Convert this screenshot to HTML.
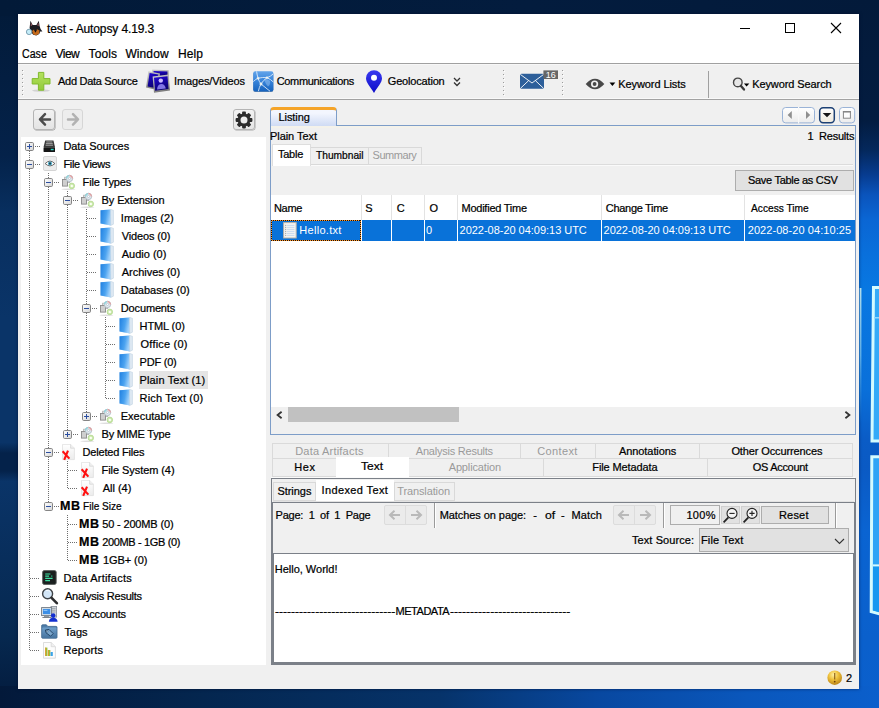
<!DOCTYPE html>
<html lang="en"><head><meta charset="utf-8"><title>test - Autopsy 4.19.3</title>
<style>
html,body{margin:0;padding:0;}
body{width:879px;height:708px;overflow:hidden;position:relative;background:#04224a;font-family:'Liberation Sans', sans-serif;font-size:11px;}
body>div,body>span,body>svg{position:absolute;}
.t{white-space:pre;display:block;}
.k{-webkit-text-stroke:0.22px #000;}
</style></head><body>
<svg width="879" height="708" viewBox="0 0 879 708" style="left:0;top:0">
<defs>
<linearGradient id="bgL" x1="0" y1="0" x2="0" y2="1">
<stop offset="0" stop-color="#021a38"/><stop offset="0.22" stop-color="#04224a"/><stop offset="0.30" stop-color="#082f5f"/><stop offset="0.45" stop-color="#0a3468"/>
<stop offset="0.625" stop-color="#0a3468"/><stop offset="0.64" stop-color="#04224a"/><stop offset="0.665" stop-color="#04224a"/><stop offset="0.68" stop-color="#0a3468"/>
<stop offset="0.9" stop-color="#06284f"/><stop offset="1" stop-color="#031a3c"/></linearGradient>
<linearGradient id="bgT" x1="0" y1="0" x2="1" y2="0">
<stop offset="0" stop-color="#021a38"/><stop offset="0.6" stop-color="#031c3e"/><stop offset="1" stop-color="#031a3a"/></linearGradient>
<linearGradient id="bgB" x1="0" y1="0" x2="1" y2="0">
<stop offset="0" stop-color="#03193a"/><stop offset="0.23" stop-color="#04264f"/><stop offset="0.5" stop-color="#06336a"/><stop offset="0.68" stop-color="#0848a0"/><stop offset="0.85" stop-color="#0a57bc"/><stop offset="1" stop-color="#0b5fcc"/></linearGradient>
<linearGradient id="bgR" x1="0" y1="0" x2="0" y2="1">
<stop offset="0" stop-color="#031a3a"/><stop offset="0.17" stop-color="#031c40"/><stop offset="0.212" stop-color="#04285c"/><stop offset="0.247" stop-color="#073c90"/>
<stop offset="0.275" stop-color="#0a54bc"/><stop offset="0.31" stop-color="#0a66d4"/><stop offset="0.36" stop-color="#0970dc"/><stop offset="0.41" stop-color="#0878e2"/>
<stop offset="0.55" stop-color="#0a70da"/><stop offset="0.62" stop-color="#0a5cc6"/><stop offset="0.66" stop-color="#0a5ac4"/><stop offset="0.75" stop-color="#0a64d2"/>
<stop offset="0.9" stop-color="#0a60cc"/><stop offset="1" stop-color="#0b5fcc"/></linearGradient>
<linearGradient id="glare" x1="0" y1="0" x2="0" y2="1"><stop offset="0" stop-color="#c8f6ff"/><stop offset="0.5" stop-color="#7fd0ff" stop-opacity="0.8"/><stop offset="1" stop-color="#3aa0f0" stop-opacity="0"/></linearGradient>
</defs>
<rect x="0" y="0" width="879" height="708" fill="url(#bgL)"/>
<rect x="0" y="0" width="879" height="16" fill="url(#bgT)"/>
<rect x="856" y="0" width="23" height="708" fill="url(#bgR)"/>
<rect x="0" y="686" width="879" height="22" fill="url(#bgB)"/>
<rect x="859.6" y="288" width="1.8" height="135" fill="url(#glare)"/>
<path d="M873.5 287.5 H882 V441 H872 Z" fill="#34aaf8" stroke="#d4fbff" stroke-width="3"/>
<rect x="874" y="317" width="6" height="1.5" fill="#8fd8ff"/>
<path d="M871.8 456.7 H882 V614.5 L871.2 611.5 Z" fill="#2ea4f6" stroke="#d4fbff" stroke-width="3"/>
<path d="M873 566.2 H880 V612.6 L873 610.4 Z" fill="#1698f0"/>
<rect x="873" y="564.4" width="7" height="2" fill="#d4fbff"/>
</svg>
<div style="left:18px;top:14px;width:841px;height:675px;background:#f0f0f0;box-shadow:0 0 3px rgba(0,8,40,.55);"></div>
<div style="left:18px;top:14px;width:841px;height:49px;background:#ffffff;"></div>
<div style="left:18px;top:63px;width:841px;height:1px;background:#a0a0a0;"></div>
<span class="t k" style="left:47.10px;top:23.24px;font-size:12px;line-height:12px;color:#000;letter-spacing:-0.115px;">test - Autopsy 4.19.3</span>
<svg width="19" height="17" viewBox="0 0 19 17" style="left:25px;top:20px">
<path d="M5.4 0.7 L7.7 5 L11.4 5 L13.8 0.7 L14.6 6 L15.6 9 L17.4 11.6 L15.2 11.6 L14.2 14 L11.2 15.4 L8.2 14.8 L6.2 12 L4.6 8 Z" fill="#1c1c22"/>
<path d="M5.9 2.4 L7.1 5.2 L5.8 6.2 Z" fill="#a86068"/><path d="M13.4 2.4 L12.2 5.2 L13.7 6.2 Z" fill="#a86068"/>
<path d="M7 11 L9 9.4 L10.4 12.4 L12 9.2 L14.6 10.4 L14 13.8 L11.2 15.2 L8.4 14.6 Z" fill="#c46a1c"/>
<path d="M9.2 10.2 L11.8 10.2 L10.5 12.6 Z" fill="#16161a"/>
<circle cx="4.1" cy="11.9" r="2.7" fill="#c4ecf8" stroke="#6f97ab" stroke-width="0.9"/>
</svg>
<div style="left:740px;top:28px;width:10px;height:1px;background:#000;"></div>
<div style="left:785px;top:23px;width:10px;height:10px;border:1px solid #000;box-sizing:border-box;"></div>
<svg width="12" height="12" viewBox="0 0 12 12" style="left:830px;top:22px"><path d="M1 1 L11 11 M11 1 L1 11" stroke="#000" stroke-width="1.1" fill="none"/></svg>
<span class="t k" style="left:22.11px;top:48.24px;font-size:12px;line-height:12px;color:#000;transform:scaleX(0.8852);transform-origin:0 0;">Case</span>
<span class="t k" style="left:55.50px;top:48.24px;font-size:12px;line-height:12px;color:#000;letter-spacing:-0.533px;">View</span>
<span class="t k" style="left:88.50px;top:48.24px;font-size:12px;line-height:12px;color:#000;letter-spacing:0.125px;">Tools</span>
<span class="t k" style="left:125.40px;top:48.24px;font-size:12px;line-height:12px;color:#000;letter-spacing:0.100px;">Window</span>
<span class="t k" style="left:178.10px;top:48.24px;font-size:12px;line-height:12px;color:#000;letter-spacing:0.067px;">Help</span>
<div style="left:18px;top:98px;width:841px;height:1px;background:#f9f9f9;"></div>
<div style="left:18px;top:99px;width:841px;height:1px;background:#a2a2a2;"></div>
<div style="left:18px;top:64px;width:841px;height:1px;background:#f7f7f7;"></div>
<div style="left:22px;top:70px;width:1px;height:25px;background:repeating-linear-gradient(to bottom,#9c9c9c 0 1px,transparent 1px 4px);"></div>
<div style="left:23px;top:71px;width:1px;height:25px;background:repeating-linear-gradient(to bottom,#ffffff 0 1px,transparent 1px 4px);"></div>
<div style="left:503px;top:70px;width:1px;height:25px;background:repeating-linear-gradient(to bottom,#9c9c9c 0 1px,transparent 1px 4px);"></div>
<div style="left:504px;top:71px;width:1px;height:25px;background:repeating-linear-gradient(to bottom,#ffffff 0 1px,transparent 1px 4px);"></div>
<div style="left:561.5px;top:70px;width:1px;height:25px;background:repeating-linear-gradient(to bottom,#9c9c9c 0 1px,transparent 1px 4px);"></div>
<div style="left:562.5px;top:71px;width:1px;height:25px;background:repeating-linear-gradient(to bottom,#ffffff 0 1px,transparent 1px 4px);"></div>
<svg width="22" height="21" viewBox="0 0 22 21" style="left:30px;top:71px">
<defs><linearGradient id="gp" x1="0" y1="0" x2="0" y2="1"><stop offset="0" stop-color="#b4e25e"/><stop offset="1" stop-color="#92ca3a"/></linearGradient></defs>
<ellipse cx="11" cy="19.6" rx="9" ry="1.2" fill="#000" opacity="0.12"/>
<path d="M8.4 1.4 H13.8 V7.6 H20 V13 H13.8 V19.2 H8.4 V13 H2.2 V7.6 H8.4 Z" fill="url(#gp)" stroke="#80ba2e" stroke-width="1" stroke-linejoin="round"/>
</svg>
<span class="t k" style="left:58.00px;top:76.09px;font-size:11px;line-height:11px;color:#000;letter-spacing:-0.286px;">Add Data Source</span>
<svg width="27" height="26" viewBox="145 68 27 26" style="left:145px;top:68px">
<defs><linearGradient id="gfr" x1="0" y1="0" x2="0.3" y2="1"><stop offset="0" stop-color="#d2d2d2"/><stop offset="1" stop-color="#7c7c7c"/></linearGradient>
<linearGradient id="gph" x1="0" y1="0" x2="0.4" y2="1"><stop offset="0" stop-color="#2408d8"/><stop offset="0.6" stop-color="#14049c"/><stop offset="1" stop-color="#0c0270"/></linearGradient></defs>
<path d="M152.2 69.6 L168.7 70.2 L168.5 78 L152 77 Z" fill="url(#gfr)"/><path d="M153.6 71 L167.4 71.5 L167.3 77 L153.4 76.4 Z" fill="url(#gph)"/>
<path d="M148.4 71.2 L160 73.4 L157.5 90 L146 87.6 Z" fill="url(#gfr)"/><path d="M149.6 72.9 L158.4 74.6 L156.4 88.2 L147.6 86.4 Z" fill="url(#gph)"/>
<path d="M152.6 76.4 L168.7 74.6 L170 90.6 L154 92.8 Z" fill="url(#gfr)"/><path d="M154 77.7 L167.5 76.2 L168.5 89 L155.1 90.7 Z" fill="url(#gph)"/>
<circle cx="160.8" cy="80.6" r="2.2" fill="#cdbcff"/><path d="M157 89.6 Q157.2 84.4 161 83.9 Q165 83.6 165.8 88.6 Z" fill="#7f74e6"/>
</svg>
<span class="t k" style="left:174.00px;top:76.09px;font-size:11px;line-height:11px;color:#000;letter-spacing:-0.133px;">Images/Videos</span>
<svg width="21" height="22" viewBox="0 0 21 22" style="left:253px;top:71px">
<defs><linearGradient id="gc" x1="0" y1="0" x2="0" y2="1"><stop offset="0" stop-color="#62a4ea"/><stop offset="0.45" stop-color="#3a86dc"/><stop offset="1" stop-color="#1763bd"/></linearGradient>
<radialGradient id="gn"><stop offset="0" stop-color="#fffdf0"/><stop offset="1" stop-color="#fffdf0" stop-opacity="0"/></radialGradient></defs>
<rect x="0.3" y="0.9" width="20" height="20.2" rx="2.2" fill="#0f3f78" opacity="0.55"/>
<rect x="0.2" y="0.2" width="20.2" height="20.2" rx="2.2" fill="url(#gc)"/>
<path d="M11 8.5 Q15 7.5 17 10 Q17.5 14 15 15.5 Q12.5 13 11 8.5 Z" fill="#9cc6f2" opacity="0.5"/>
<g stroke="#f4f9ff" stroke-width="1" fill="none" opacity="0.78">
<path d="M3.6 0.4 Q4 4 5.1 7.2 Q6 10.5 8 13 Q6 16.5 5.4 20.2"/><path d="M8 13 L17 20.2"/>
<path d="M0.3 10.6 Q3 8 5.1 7.2 Q10 6 14 6.7 Q17.6 5.5 20.3 2.8"/><path d="M14 6.7 Q10 9.5 8 13"/><path d="M14 6.7 Q18 8.4 20.3 11"/></g>
<circle cx="5.1" cy="7.2" r="2" fill="url(#gn)"/><circle cx="14" cy="6.7" r="2" fill="url(#gn)"/><circle cx="8" cy="13" r="2.2" fill="url(#gn)"/>
</svg>
<span class="t k" style="left:276.70px;top:76.09px;font-size:11px;line-height:11px;color:#000;letter-spacing:-0.338px;">Communications</span>
<svg width="18" height="24" viewBox="0 0 18 24" style="left:364.5px;top:69.5px">
<defs><linearGradient id="gg" x1="0" y1="0" x2="0" y2="1"><stop offset="0" stop-color="#3a3af0"/><stop offset="1" stop-color="#0c0cc8"/></linearGradient></defs>
<path d="M9 23 C5 16 1 12.5 1 8.2 A8 8 0 0 1 17 8.2 C17 12.5 13 16 9 23 Z" fill="url(#gg)"/>
<circle cx="9" cy="7.8" r="3" fill="#fff"/></svg>
<span class="t k" style="left:387.80px;top:76.09px;font-size:11px;line-height:11px;color:#000;letter-spacing:-0.180px;">Geolocation</span>
<svg width="8" height="10" viewBox="0 0 8 10" style="left:452.5px;top:76.5px"><path d="M1 1 L4 4 L7 1 M1 5.5 L4 8.5 L7 5.5" stroke="#333" stroke-width="1.3" fill="none"/></svg>
<svg width="40" height="20" viewBox="0 0 40 20" style="left:519px;top:70px">
<rect x="1" y="3.8" width="24" height="15" rx="1.5" fill="#2d5f9a"/>
<path d="M1.5 4.5 L13 13 L24.5 4.5 M1.5 18.3 L9.6 10.6 M24.5 18.3 L16.4 10.6" stroke="#fff" stroke-width="0.9" fill="none"/>
<rect x="24.4" y="0.4" width="14.6" height="8.6" fill="#666"/>
<text x="31.7" y="8" font-family="'Liberation Sans',sans-serif" font-size="9" fill="#fff" text-anchor="middle">16</text>
</svg>
<svg width="20" height="12" viewBox="0 0 20 12" style="left:585px;top:78px">
<path d="M0.7 6 Q10 -4.6 19.3 6 Q10 16.6 0.7 6 Z" fill="#484848"/>
<circle cx="9.6" cy="6" r="3.6" fill="#f0f0f0"/><circle cx="9.6" cy="6" r="1.9" fill="#484848"/></svg>
<svg width="7" height="5" viewBox="0 0 7 5" style="left:609px;top:82.4px"><path d="M0.5 0.4 H6.3 L3.4 4 Z" fill="#000"/></svg>
<span class="t k" style="left:618.20px;top:79.09px;font-size:11px;line-height:11px;color:#000;letter-spacing:-0.075px;">Keyword Lists</span>
<div style="left:708px;top:71px;width:1px;height:27px;background:#a0a0a0;"></div>
<svg width="18" height="15" viewBox="0 0 18 15" style="left:732px;top:76.6px">
<circle cx="5.8" cy="5.4" r="4.3" fill="#e6e6e6" stroke="#454545" stroke-width="1.4"/>
<path d="M8.8 8.8 L12 12.6" stroke="#3a3a3a" stroke-width="2.3" stroke-linecap="round"/>
<path d="M11.9 6.4 H17.3 L14.6 9.5 Z" fill="#000"/></svg>
<span class="t k" style="left:752.20px;top:79.09px;font-size:11px;line-height:11px;color:#000;letter-spacing:-0.092px;">Keyword Search</span>
<div style="left:33px;top:109px;width:22px;height:21px;background:linear-gradient(#f2f2f2,#e4e4e4);border:1px solid #b4b4b4;box-sizing:border-box;border-radius:3px;box-shadow:0.5px 0.5px 0 #9c9c9c;"></div>
<svg width="14" height="15" viewBox="0 0 14 15" style="left:37.5px;top:112px"><path d="M12 7.4 H3.2 M7 2.2 L2 7.4 L7 12.6" stroke="#4c4c4c" stroke-width="2.5" fill="none" stroke-linecap="round" stroke-linejoin="round"/></svg>
<div style="left:62px;top:109px;width:21px;height:21px;background:#ededed;border:1px solid #d6d6d6;box-sizing:border-box;border-radius:3px;"></div>
<svg width="14" height="15" viewBox="0 0 14 15" style="left:65.5px;top:112px"><path d="M2 7.4 H10.8 M7 2.2 L12 7.4 L7 12.6" stroke="#b2b2b2" stroke-width="2.5" fill="none" stroke-linecap="round" stroke-linejoin="round"/></svg>
<div style="left:233px;top:109px;width:22px;height:21px;background:linear-gradient(#f2f2f2,#e6e6e6);border:1px solid #b4b4b4;box-sizing:border-box;border-radius:3px;box-shadow:0.5px 0.5px 0 #a8a8a8;"></div>
<svg width="18" height="18" viewBox="0 0 18 18" style="left:235px;top:110.8px">
<g fill="#2b2b2b"><g id="tth"><rect x="7.1" y="0.6" width="3.8" height="4" rx="0.8"/><rect x="7.1" y="13.4" width="3.8" height="4" rx="0.8"/></g>
<use href="#tth" transform="rotate(45 9 9)"/><use href="#tth" transform="rotate(90 9 9)"/><use href="#tth" transform="rotate(135 9 9)"/></g>
<circle cx="9" cy="9" r="5" fill="none" stroke="#2b2b2b" stroke-width="3"/></svg>
<div style="left:21px;top:137px;width:245px;height:528px;background:#ffffff;"></div>
<div style="left:139px;top:371px;width:69px;height:18px;background:#e4e4e4;"></div>
<div style="left:29px;top:151px;width:1px;height:500px;background:repeating-linear-gradient(to bottom,#6e6e6e 0 1px,transparent 1px 2px);"></div>
<div style="left:48px;top:173px;width:1px;height:329px;background:repeating-linear-gradient(to bottom,#6e6e6e 0 1px,transparent 1px 2px);"></div>
<div style="left:67px;top:191px;width:1px;height:239px;background:repeating-linear-gradient(to bottom,#6e6e6e 0 1px,transparent 1px 2px);"></div>
<div style="left:86px;top:209px;width:1px;height:203px;background:repeating-linear-gradient(to bottom,#6e6e6e 0 1px,transparent 1px 2px);"></div>
<div style="left:105px;top:317px;width:1px;height:82px;background:repeating-linear-gradient(to bottom,#6e6e6e 0 1px,transparent 1px 2px);"></div>
<div style="left:67px;top:461px;width:1px;height:28px;background:repeating-linear-gradient(to bottom,#6e6e6e 0 1px,transparent 1px 2px);"></div>
<div style="left:67px;top:515px;width:1px;height:46px;background:repeating-linear-gradient(to bottom,#6e6e6e 0 1px,transparent 1px 2px);"></div>
<svg width="9" height="9" viewBox="0 0 9 9" style="left:25px;top:142px"><defs><linearGradient id="gbx" x1="0" y1="0" x2="1" y2="1"><stop offset="0" stop-color="#ffffff"/><stop offset="1" stop-color="#d6d6d6"/></linearGradient></defs><rect x="0.5" y="0.5" width="8" height="8" rx="1.2" fill="url(#gbx)" stroke="#858585"/><path d="M2 4.5 H7" stroke="#2b4ea0" stroke-width="1"/><path d="M4.5 2 V7" stroke="#2b4ea0" stroke-width="1"/></svg>
<div style="left:35px;top:146px;width:6px;height:1px;background:repeating-linear-gradient(to right,#6e6e6e 0 1px,transparent 1px 2px);"></div>
<svg width="12.6" height="12.6" viewBox="0 0 14 14" style="left:42.7px;top:139.8px">
<path d="M2.4 0.6 H11.6 L13.4 8 H0.6 Z" fill="#3a3a3a"/><path d="M3.6 2.2 H10.4 M3.2 4 H10.8 M2.9 5.8 H11.1" stroke="#bdbdbd" stroke-width="0.9"/>
<rect x="0.6" y="8" width="12.8" height="5.4" rx="0.8" fill="#151515"/><rect x="8.6" y="9.8" width="3.2" height="1.6" fill="#2fd6c8"/></svg>
<span class="t k" style="left:63.40px;top:141.09px;font-size:11px;line-height:11px;color:#000;letter-spacing:-0.082px;">Data Sources</span>
<svg width="9" height="9" viewBox="0 0 9 9" style="left:25px;top:160px"><defs><linearGradient id="gbx" x1="0" y1="0" x2="1" y2="1"><stop offset="0" stop-color="#ffffff"/><stop offset="1" stop-color="#d6d6d6"/></linearGradient></defs><rect x="0.5" y="0.5" width="8" height="8" rx="1.2" fill="url(#gbx)" stroke="#858585"/><path d="M2 4.5 H7" stroke="#2b4ea0" stroke-width="1"/></svg>
<div style="left:35px;top:164px;width:6px;height:1px;background:repeating-linear-gradient(to right,#6e6e6e 0 1px,transparent 1px 2px);"></div>
<svg width="14" height="15" viewBox="0 0 15 15" preserveAspectRatio="none" style="left:42.8px;top:155.5px">
<rect x="0.5" y="0.5" width="14" height="14" rx="1.5" fill="#ececec" stroke="#d2d2d2"/>
<path d="M2.3 7.6 Q7.5 2.6 12.7 7.6 Q7.5 12.2 2.3 7.6 Z" fill="#fff" stroke="#555" stroke-width="0.9"/>
<circle cx="7.5" cy="7.5" r="2.1" fill="#3aa3c4"/><circle cx="7.5" cy="7.5" r="0.9" fill="#222"/></svg>
<span class="t k" style="left:63.40px;top:159.09px;font-size:11px;line-height:11px;color:#000;letter-spacing:-0.322px;">File Views</span>
<svg width="9" height="9" viewBox="0 0 9 9" style="left:44px;top:178px"><defs><linearGradient id="gbx" x1="0" y1="0" x2="1" y2="1"><stop offset="0" stop-color="#ffffff"/><stop offset="1" stop-color="#d6d6d6"/></linearGradient></defs><rect x="0.5" y="0.5" width="8" height="8" rx="1.2" fill="url(#gbx)" stroke="#858585"/><path d="M2 4.5 H7" stroke="#2b4ea0" stroke-width="1"/></svg>
<div style="left:54px;top:182px;width:6px;height:1px;background:repeating-linear-gradient(to right,#6e6e6e 0 1px,transparent 1px 2px);"></div>
<svg width="16" height="17" viewBox="0 0 16 17" style="left:61px;top:174px">
<ellipse cx="7.4" cy="15.3" rx="7" ry="0.8" fill="#000" opacity="0.13"/>
<rect x="3.6" y="3.2" width="5.2" height="5.4" fill="#e6e6e6" stroke="#b0b0b0" stroke-width="0.8"/>
<rect x="1.5" y="5.5" width="5" height="6.6" fill="#cfcfcf" stroke="#8a8a8a" stroke-width="0.9"/>
<circle cx="8.5" cy="4.4" r="3.2" fill="#e3eaef" stroke="#a9b7c2" stroke-width="0.8"/>
<path d="M8.5 1.6 A2.8 2.8 0 0 1 11.3 4.4" stroke="#e79a9a" stroke-width="1.2" fill="none"/><path d="M5.7 4.4 A2.8 2.8 0 0 1 8 1.65" stroke="#8fd3da" stroke-width="1.2" fill="none"/>
<circle cx="8.5" cy="4.4" r="1.1" fill="#fff" stroke="#9ab" stroke-width="0.5"/>
<circle cx="10.8" cy="11.9" r="2.8" fill="#cdeaae" stroke="#a6d080" stroke-width="0.6"/><circle cx="10.8" cy="11.9" r="1.2" fill="#fbfff4"/></svg>
<span class="t k" style="left:82.60px;top:177.09px;font-size:11px;line-height:11px;color:#000;letter-spacing:-0.144px;">File Types</span>
<svg width="9" height="9" viewBox="0 0 9 9" style="left:63px;top:196px"><defs><linearGradient id="gbx" x1="0" y1="0" x2="1" y2="1"><stop offset="0" stop-color="#ffffff"/><stop offset="1" stop-color="#d6d6d6"/></linearGradient></defs><rect x="0.5" y="0.5" width="8" height="8" rx="1.2" fill="url(#gbx)" stroke="#858585"/><path d="M2 4.5 H7" stroke="#2b4ea0" stroke-width="1"/></svg>
<div style="left:73px;top:200px;width:6px;height:1px;background:repeating-linear-gradient(to right,#6e6e6e 0 1px,transparent 1px 2px);"></div>
<svg width="16" height="17" viewBox="0 0 16 17" style="left:80px;top:192px">
<ellipse cx="7.4" cy="15.3" rx="7" ry="0.8" fill="#000" opacity="0.13"/>
<rect x="3.6" y="3.2" width="5.2" height="5.4" fill="#e6e6e6" stroke="#b0b0b0" stroke-width="0.8"/>
<rect x="1.5" y="5.5" width="5" height="6.6" fill="#cfcfcf" stroke="#8a8a8a" stroke-width="0.9"/>
<circle cx="8.5" cy="4.4" r="3.2" fill="#e3eaef" stroke="#a9b7c2" stroke-width="0.8"/>
<path d="M8.5 1.6 A2.8 2.8 0 0 1 11.3 4.4" stroke="#e79a9a" stroke-width="1.2" fill="none"/><path d="M5.7 4.4 A2.8 2.8 0 0 1 8 1.65" stroke="#8fd3da" stroke-width="1.2" fill="none"/>
<circle cx="8.5" cy="4.4" r="1.1" fill="#fff" stroke="#9ab" stroke-width="0.5"/>
<circle cx="10.8" cy="11.9" r="2.8" fill="#cdeaae" stroke="#a6d080" stroke-width="0.6"/><circle cx="10.8" cy="11.9" r="1.2" fill="#fbfff4"/></svg>
<span class="t k" style="left:101.60px;top:195.09px;font-size:11px;line-height:11px;color:#000;letter-spacing:-0.118px;">By Extension</span>
<div style="left:87px;top:218px;width:10px;height:1px;background:repeating-linear-gradient(to right,#6e6e6e 0 1px,transparent 1px 2px);"></div>
<svg width="14" height="17" viewBox="0 0 14 17" style="left:100px;top:209px">
<defs><linearGradient id="gb" x1="0" y1="0" x2="1" y2="0.3"><stop offset="0" stop-color="#1f7fe0"/><stop offset="0.6" stop-color="#4ba3f0"/><stop offset="1" stop-color="#9fd0fa"/></linearGradient></defs>
<path d="M0.5 1.2 L10.6 0.4 L13.4 1.2 L13.4 15.2 L10.8 16.4 L0.5 14.6 Z" fill="#cfe3f4"/>
<path d="M0.5 1.2 L10.6 0.4 L10.8 16.4 L0.5 14.6 Z" fill="url(#gb)"/>
<path d="M10.6 0.4 L13.4 1.2 L13.4 15.2 L10.8 16.4 Z" fill="#dfeaf4" stroke="#b9c9d8" stroke-width="0.4"/></svg>
<span class="t k" style="left:120.80px;top:213.09px;font-size:11px;line-height:11px;color:#000;letter-spacing:0.044px;">Images (2)</span>
<div style="left:87px;top:236px;width:10px;height:1px;background:repeating-linear-gradient(to right,#6e6e6e 0 1px,transparent 1px 2px);"></div>
<svg width="14" height="17" viewBox="0 0 14 17" style="left:100px;top:227px">
<defs><linearGradient id="gb" x1="0" y1="0" x2="1" y2="0.3"><stop offset="0" stop-color="#1f7fe0"/><stop offset="0.6" stop-color="#4ba3f0"/><stop offset="1" stop-color="#9fd0fa"/></linearGradient></defs>
<path d="M0.5 1.2 L10.6 0.4 L13.4 1.2 L13.4 15.2 L10.8 16.4 L0.5 14.6 Z" fill="#cfe3f4"/>
<path d="M0.5 1.2 L10.6 0.4 L10.8 16.4 L0.5 14.6 Z" fill="url(#gb)"/>
<path d="M10.6 0.4 L13.4 1.2 L13.4 15.2 L10.8 16.4 Z" fill="#dfeaf4" stroke="#b9c9d8" stroke-width="0.4"/></svg>
<span class="t k" style="left:121.80px;top:231.09px;font-size:11px;line-height:11px;color:#000;letter-spacing:-0.144px;">Videos (0)</span>
<div style="left:87px;top:254px;width:10px;height:1px;background:repeating-linear-gradient(to right,#6e6e6e 0 1px,transparent 1px 2px);"></div>
<svg width="14" height="17" viewBox="0 0 14 17" style="left:100px;top:245px">
<defs><linearGradient id="gb" x1="0" y1="0" x2="1" y2="0.3"><stop offset="0" stop-color="#1f7fe0"/><stop offset="0.6" stop-color="#4ba3f0"/><stop offset="1" stop-color="#9fd0fa"/></linearGradient></defs>
<path d="M0.5 1.2 L10.6 0.4 L13.4 1.2 L13.4 15.2 L10.8 16.4 L0.5 14.6 Z" fill="#cfe3f4"/>
<path d="M0.5 1.2 L10.6 0.4 L10.8 16.4 L0.5 14.6 Z" fill="url(#gb)"/>
<path d="M10.6 0.4 L13.4 1.2 L13.4 15.2 L10.8 16.4 Z" fill="#dfeaf4" stroke="#b9c9d8" stroke-width="0.4"/></svg>
<span class="t k" style="left:121.80px;top:249.09px;font-size:11px;line-height:11px;color:#000;letter-spacing:-0.013px;">Audio (0)</span>
<div style="left:87px;top:272px;width:10px;height:1px;background:repeating-linear-gradient(to right,#6e6e6e 0 1px,transparent 1px 2px);"></div>
<svg width="14" height="17" viewBox="0 0 14 17" style="left:100px;top:263px">
<defs><linearGradient id="gb" x1="0" y1="0" x2="1" y2="0.3"><stop offset="0" stop-color="#1f7fe0"/><stop offset="0.6" stop-color="#4ba3f0"/><stop offset="1" stop-color="#9fd0fa"/></linearGradient></defs>
<path d="M0.5 1.2 L10.6 0.4 L13.4 1.2 L13.4 15.2 L10.8 16.4 L0.5 14.6 Z" fill="#cfe3f4"/>
<path d="M0.5 1.2 L10.6 0.4 L10.8 16.4 L0.5 14.6 Z" fill="url(#gb)"/>
<path d="M10.6 0.4 L13.4 1.2 L13.4 15.2 L10.8 16.4 Z" fill="#dfeaf4" stroke="#b9c9d8" stroke-width="0.4"/></svg>
<span class="t k" style="left:121.80px;top:267.09px;font-size:11px;line-height:11px;color:#000;letter-spacing:-0.036px;">Archives (0)</span>
<div style="left:87px;top:290px;width:10px;height:1px;background:repeating-linear-gradient(to right,#6e6e6e 0 1px,transparent 1px 2px);"></div>
<svg width="14" height="17" viewBox="0 0 14 17" style="left:100px;top:281px">
<defs><linearGradient id="gb" x1="0" y1="0" x2="1" y2="0.3"><stop offset="0" stop-color="#1f7fe0"/><stop offset="0.6" stop-color="#4ba3f0"/><stop offset="1" stop-color="#9fd0fa"/></linearGradient></defs>
<path d="M0.5 1.2 L10.6 0.4 L13.4 1.2 L13.4 15.2 L10.8 16.4 L0.5 14.6 Z" fill="#cfe3f4"/>
<path d="M0.5 1.2 L10.6 0.4 L10.8 16.4 L0.5 14.6 Z" fill="url(#gb)"/>
<path d="M10.6 0.4 L13.4 1.2 L13.4 15.2 L10.8 16.4 Z" fill="#dfeaf4" stroke="#b9c9d8" stroke-width="0.4"/></svg>
<span class="t k" style="left:120.80px;top:285.09px;font-size:11px;line-height:11px;color:#000;letter-spacing:-0.017px;">Databases (0)</span>
<svg width="9" height="9" viewBox="0 0 9 9" style="left:82px;top:304px"><defs><linearGradient id="gbx" x1="0" y1="0" x2="1" y2="1"><stop offset="0" stop-color="#ffffff"/><stop offset="1" stop-color="#d6d6d6"/></linearGradient></defs><rect x="0.5" y="0.5" width="8" height="8" rx="1.2" fill="url(#gbx)" stroke="#858585"/><path d="M2 4.5 H7" stroke="#2b4ea0" stroke-width="1"/></svg>
<div style="left:92px;top:308px;width:6px;height:1px;background:repeating-linear-gradient(to right,#6e6e6e 0 1px,transparent 1px 2px);"></div>
<svg width="16" height="17" viewBox="0 0 16 17" style="left:99px;top:300px">
<ellipse cx="7.4" cy="15.3" rx="7" ry="0.8" fill="#000" opacity="0.13"/>
<rect x="3.6" y="3.2" width="5.2" height="5.4" fill="#e6e6e6" stroke="#b0b0b0" stroke-width="0.8"/>
<rect x="1.5" y="5.5" width="5" height="6.6" fill="#cfcfcf" stroke="#8a8a8a" stroke-width="0.9"/>
<circle cx="8.5" cy="4.4" r="3.2" fill="#e3eaef" stroke="#a9b7c2" stroke-width="0.8"/>
<path d="M8.5 1.6 A2.8 2.8 0 0 1 11.3 4.4" stroke="#e79a9a" stroke-width="1.2" fill="none"/><path d="M5.7 4.4 A2.8 2.8 0 0 1 8 1.65" stroke="#8fd3da" stroke-width="1.2" fill="none"/>
<circle cx="8.5" cy="4.4" r="1.1" fill="#fff" stroke="#9ab" stroke-width="0.5"/>
<circle cx="10.8" cy="11.9" r="2.8" fill="#cdeaae" stroke="#a6d080" stroke-width="0.6"/><circle cx="10.8" cy="11.9" r="1.2" fill="#fbfff4"/></svg>
<span class="t k" style="left:120.80px;top:303.09px;font-size:11px;line-height:11px;color:#000;letter-spacing:-0.150px;">Documents</span>
<div style="left:106px;top:326px;width:10px;height:1px;background:repeating-linear-gradient(to right,#6e6e6e 0 1px,transparent 1px 2px);"></div>
<svg width="14" height="17" viewBox="0 0 14 17" style="left:119px;top:317px">
<defs><linearGradient id="gb" x1="0" y1="0" x2="1" y2="0.3"><stop offset="0" stop-color="#1f7fe0"/><stop offset="0.6" stop-color="#4ba3f0"/><stop offset="1" stop-color="#9fd0fa"/></linearGradient></defs>
<path d="M0.5 1.2 L10.6 0.4 L13.4 1.2 L13.4 15.2 L10.8 16.4 L0.5 14.6 Z" fill="#cfe3f4"/>
<path d="M0.5 1.2 L10.6 0.4 L10.8 16.4 L0.5 14.6 Z" fill="url(#gb)"/>
<path d="M10.6 0.4 L13.4 1.2 L13.4 15.2 L10.8 16.4 Z" fill="#dfeaf4" stroke="#b9c9d8" stroke-width="0.4"/></svg>
<span class="t k" style="left:139.60px;top:321.09px;font-size:11px;line-height:11px;color:#000;letter-spacing:-0.114px;">HTML (0)</span>
<div style="left:106px;top:344px;width:10px;height:1px;background:repeating-linear-gradient(to right,#6e6e6e 0 1px,transparent 1px 2px);"></div>
<svg width="14" height="17" viewBox="0 0 14 17" style="left:119px;top:335px">
<defs><linearGradient id="gb" x1="0" y1="0" x2="1" y2="0.3"><stop offset="0" stop-color="#1f7fe0"/><stop offset="0.6" stop-color="#4ba3f0"/><stop offset="1" stop-color="#9fd0fa"/></linearGradient></defs>
<path d="M0.5 1.2 L10.6 0.4 L13.4 1.2 L13.4 15.2 L10.8 16.4 L0.5 14.6 Z" fill="#cfe3f4"/>
<path d="M0.5 1.2 L10.6 0.4 L10.8 16.4 L0.5 14.6 Z" fill="url(#gb)"/>
<path d="M10.6 0.4 L13.4 1.2 L13.4 15.2 L10.8 16.4 Z" fill="#dfeaf4" stroke="#b9c9d8" stroke-width="0.4"/></svg>
<span class="t k" style="left:140.60px;top:339.09px;font-size:11px;line-height:11px;color:#000;letter-spacing:0.200px;">Office (0)</span>
<div style="left:106px;top:362px;width:10px;height:1px;background:repeating-linear-gradient(to right,#6e6e6e 0 1px,transparent 1px 2px);"></div>
<svg width="14" height="17" viewBox="0 0 14 17" style="left:119px;top:353px">
<defs><linearGradient id="gb" x1="0" y1="0" x2="1" y2="0.3"><stop offset="0" stop-color="#1f7fe0"/><stop offset="0.6" stop-color="#4ba3f0"/><stop offset="1" stop-color="#9fd0fa"/></linearGradient></defs>
<path d="M0.5 1.2 L10.6 0.4 L13.4 1.2 L13.4 15.2 L10.8 16.4 L0.5 14.6 Z" fill="#cfe3f4"/>
<path d="M0.5 1.2 L10.6 0.4 L10.8 16.4 L0.5 14.6 Z" fill="url(#gb)"/>
<path d="M10.6 0.4 L13.4 1.2 L13.4 15.2 L10.8 16.4 Z" fill="#dfeaf4" stroke="#b9c9d8" stroke-width="0.4"/></svg>
<span class="t k" style="left:139.60px;top:357.09px;font-size:11px;line-height:11px;color:#000;letter-spacing:-0.233px;">PDF (0)</span>
<div style="left:106px;top:380px;width:10px;height:1px;background:repeating-linear-gradient(to right,#6e6e6e 0 1px,transparent 1px 2px);"></div>
<svg width="14" height="17" viewBox="0 0 14 17" style="left:119px;top:371px">
<defs><linearGradient id="gb" x1="0" y1="0" x2="1" y2="0.3"><stop offset="0" stop-color="#1f7fe0"/><stop offset="0.6" stop-color="#4ba3f0"/><stop offset="1" stop-color="#9fd0fa"/></linearGradient></defs>
<path d="M0.5 1.2 L10.6 0.4 L13.4 1.2 L13.4 15.2 L10.8 16.4 L0.5 14.6 Z" fill="#cfe3f4"/>
<path d="M0.5 1.2 L10.6 0.4 L10.8 16.4 L0.5 14.6 Z" fill="url(#gb)"/>
<path d="M10.6 0.4 L13.4 1.2 L13.4 15.2 L10.8 16.4 Z" fill="#dfeaf4" stroke="#b9c9d8" stroke-width="0.4"/></svg>
<span class="t k" style="left:139.60px;top:375.09px;font-size:11px;line-height:11px;color:#000;letter-spacing:0.123px;">Plain Text (1)</span>
<div style="left:106px;top:398px;width:10px;height:1px;background:repeating-linear-gradient(to right,#6e6e6e 0 1px,transparent 1px 2px);"></div>
<svg width="14" height="17" viewBox="0 0 14 17" style="left:119px;top:389px">
<defs><linearGradient id="gb" x1="0" y1="0" x2="1" y2="0.3"><stop offset="0" stop-color="#1f7fe0"/><stop offset="0.6" stop-color="#4ba3f0"/><stop offset="1" stop-color="#9fd0fa"/></linearGradient></defs>
<path d="M0.5 1.2 L10.6 0.4 L13.4 1.2 L13.4 15.2 L10.8 16.4 L0.5 14.6 Z" fill="#cfe3f4"/>
<path d="M0.5 1.2 L10.6 0.4 L10.8 16.4 L0.5 14.6 Z" fill="url(#gb)"/>
<path d="M10.6 0.4 L13.4 1.2 L13.4 15.2 L10.8 16.4 Z" fill="#dfeaf4" stroke="#b9c9d8" stroke-width="0.4"/></svg>
<span class="t k" style="left:139.60px;top:393.09px;font-size:11px;line-height:11px;color:#000;letter-spacing:0.167px;">Rich Text (0)</span>
<svg width="9" height="9" viewBox="0 0 9 9" style="left:82px;top:412px"><defs><linearGradient id="gbx" x1="0" y1="0" x2="1" y2="1"><stop offset="0" stop-color="#ffffff"/><stop offset="1" stop-color="#d6d6d6"/></linearGradient></defs><rect x="0.5" y="0.5" width="8" height="8" rx="1.2" fill="url(#gbx)" stroke="#858585"/><path d="M2 4.5 H7" stroke="#2b4ea0" stroke-width="1"/><path d="M4.5 2 V7" stroke="#2b4ea0" stroke-width="1"/></svg>
<div style="left:92px;top:416px;width:6px;height:1px;background:repeating-linear-gradient(to right,#6e6e6e 0 1px,transparent 1px 2px);"></div>
<svg width="16" height="17" viewBox="0 0 16 17" style="left:99px;top:408px">
<ellipse cx="7.4" cy="15.3" rx="7" ry="0.8" fill="#000" opacity="0.13"/>
<rect x="3.6" y="3.2" width="5.2" height="5.4" fill="#e6e6e6" stroke="#b0b0b0" stroke-width="0.8"/>
<rect x="1.5" y="5.5" width="5" height="6.6" fill="#cfcfcf" stroke="#8a8a8a" stroke-width="0.9"/>
<circle cx="8.5" cy="4.4" r="3.2" fill="#e3eaef" stroke="#a9b7c2" stroke-width="0.8"/>
<path d="M8.5 1.6 A2.8 2.8 0 0 1 11.3 4.4" stroke="#e79a9a" stroke-width="1.2" fill="none"/><path d="M5.7 4.4 A2.8 2.8 0 0 1 8 1.65" stroke="#8fd3da" stroke-width="1.2" fill="none"/>
<circle cx="8.5" cy="4.4" r="1.1" fill="#fff" stroke="#9ab" stroke-width="0.5"/>
<circle cx="10.8" cy="11.9" r="2.8" fill="#cdeaae" stroke="#a6d080" stroke-width="0.6"/><circle cx="10.8" cy="11.9" r="1.2" fill="#fbfff4"/></svg>
<span class="t k" style="left:120.80px;top:411.09px;font-size:11px;line-height:11px;color:#000;letter-spacing:-0.022px;">Executable</span>
<svg width="9" height="9" viewBox="0 0 9 9" style="left:63px;top:430px"><defs><linearGradient id="gbx" x1="0" y1="0" x2="1" y2="1"><stop offset="0" stop-color="#ffffff"/><stop offset="1" stop-color="#d6d6d6"/></linearGradient></defs><rect x="0.5" y="0.5" width="8" height="8" rx="1.2" fill="url(#gbx)" stroke="#858585"/><path d="M2 4.5 H7" stroke="#2b4ea0" stroke-width="1"/><path d="M4.5 2 V7" stroke="#2b4ea0" stroke-width="1"/></svg>
<div style="left:73px;top:434px;width:6px;height:1px;background:repeating-linear-gradient(to right,#6e6e6e 0 1px,transparent 1px 2px);"></div>
<svg width="16" height="17" viewBox="0 0 16 17" style="left:80px;top:426px">
<ellipse cx="7.4" cy="15.3" rx="7" ry="0.8" fill="#000" opacity="0.13"/>
<rect x="3.6" y="3.2" width="5.2" height="5.4" fill="#e6e6e6" stroke="#b0b0b0" stroke-width="0.8"/>
<rect x="1.5" y="5.5" width="5" height="6.6" fill="#cfcfcf" stroke="#8a8a8a" stroke-width="0.9"/>
<circle cx="8.5" cy="4.4" r="3.2" fill="#e3eaef" stroke="#a9b7c2" stroke-width="0.8"/>
<path d="M8.5 1.6 A2.8 2.8 0 0 1 11.3 4.4" stroke="#e79a9a" stroke-width="1.2" fill="none"/><path d="M5.7 4.4 A2.8 2.8 0 0 1 8 1.65" stroke="#8fd3da" stroke-width="1.2" fill="none"/>
<circle cx="8.5" cy="4.4" r="1.1" fill="#fff" stroke="#9ab" stroke-width="0.5"/>
<circle cx="10.8" cy="11.9" r="2.8" fill="#cdeaae" stroke="#a6d080" stroke-width="0.6"/><circle cx="10.8" cy="11.9" r="1.2" fill="#fbfff4"/></svg>
<span class="t k" style="left:101.60px;top:429.09px;font-size:11px;line-height:11px;color:#000;letter-spacing:-0.218px;">By MIME Type</span>
<svg width="9" height="9" viewBox="0 0 9 9" style="left:44px;top:448px"><defs><linearGradient id="gbx" x1="0" y1="0" x2="1" y2="1"><stop offset="0" stop-color="#ffffff"/><stop offset="1" stop-color="#d6d6d6"/></linearGradient></defs><rect x="0.5" y="0.5" width="8" height="8" rx="1.2" fill="url(#gbx)" stroke="#858585"/><path d="M2 4.5 H7" stroke="#2b4ea0" stroke-width="1"/></svg>
<div style="left:54px;top:452px;width:6px;height:1px;background:repeating-linear-gradient(to right,#6e6e6e 0 1px,transparent 1px 2px);"></div>
<svg width="14" height="17" viewBox="0 0 14 17" style="left:61px;top:444px">
<defs><linearGradient id="gd" x1="0" y1="0" x2="0" y2="1"><stop offset="0" stop-color="#ffffff"/><stop offset="1" stop-color="#ececec"/></linearGradient></defs>
<path d="M1.5 0.4 H9.6 L13.4 4.2 V15.6 H1.5 Z" fill="url(#gd)" stroke="#dcdcdc" stroke-width="0.7"/><path d="M9.6 0.4 V4.2 H13.4" fill="#f1f1f1" stroke="#d2d2d2" stroke-width="0.7"/>
<path d="M1.6 7.2 L8.4 14.6 M7 6.6 L3.2 15.8" stroke="#ff1010" stroke-width="2.1"/></svg>
<span class="t k" style="left:82.60px;top:447.09px;font-size:11px;line-height:11px;color:#000;letter-spacing:-0.192px;">Deleted Files</span>
<div style="left:68px;top:470px;width:10px;height:1px;background:repeating-linear-gradient(to right,#6e6e6e 0 1px,transparent 1px 2px);"></div>
<svg width="14" height="17" viewBox="0 0 14 17" style="left:80px;top:462px">
<defs><linearGradient id="gd" x1="0" y1="0" x2="0" y2="1"><stop offset="0" stop-color="#ffffff"/><stop offset="1" stop-color="#ececec"/></linearGradient></defs>
<path d="M1.5 0.4 H9.6 L13.4 4.2 V15.6 H1.5 Z" fill="url(#gd)" stroke="#dcdcdc" stroke-width="0.7"/><path d="M9.6 0.4 V4.2 H13.4" fill="#f1f1f1" stroke="#d2d2d2" stroke-width="0.7"/>
<path d="M1.6 7.2 L8.4 14.6 M7 6.6 L3.2 15.8" stroke="#ff1010" stroke-width="2.1"/></svg>
<span class="t k" style="left:101.60px;top:465.09px;font-size:11px;line-height:11px;color:#000;letter-spacing:-0.071px;">File System (4)</span>
<div style="left:68px;top:488px;width:10px;height:1px;background:repeating-linear-gradient(to right,#6e6e6e 0 1px,transparent 1px 2px);"></div>
<svg width="14" height="17" viewBox="0 0 14 17" style="left:80px;top:480px">
<defs><linearGradient id="gd" x1="0" y1="0" x2="0" y2="1"><stop offset="0" stop-color="#ffffff"/><stop offset="1" stop-color="#ececec"/></linearGradient></defs>
<path d="M1.5 0.4 H9.6 L13.4 4.2 V15.6 H1.5 Z" fill="url(#gd)" stroke="#dcdcdc" stroke-width="0.7"/><path d="M9.6 0.4 V4.2 H13.4" fill="#f1f1f1" stroke="#d2d2d2" stroke-width="0.7"/>
<path d="M1.6 7.2 L8.4 14.6 M7 6.6 L3.2 15.8" stroke="#ff1010" stroke-width="2.1"/></svg>
<span class="t k" style="left:102.80px;top:483.09px;font-size:11px;line-height:11px;color:#000;letter-spacing:-0.033px;">All (4)</span>
<svg width="9" height="9" viewBox="0 0 9 9" style="left:44px;top:502px"><defs><linearGradient id="gbx" x1="0" y1="0" x2="1" y2="1"><stop offset="0" stop-color="#ffffff"/><stop offset="1" stop-color="#d6d6d6"/></linearGradient></defs><rect x="0.5" y="0.5" width="8" height="8" rx="1.2" fill="url(#gbx)" stroke="#858585"/><path d="M2 4.5 H7" stroke="#2b4ea0" stroke-width="1"/></svg>
<div style="left:54px;top:506px;width:6px;height:1px;background:repeating-linear-gradient(to right,#6e6e6e 0 1px,transparent 1px 2px);"></div>
<span class="t k" style="left:60.10px;top:499.82px;font-size:12.5px;line-height:12.5px;color:#000;letter-spacing:0.500px;font-weight:bold;">MB</span>
<span class="t k" style="left:82.68px;top:501.09px;font-size:11px;line-height:11px;color:#000;transform:scaleX(0.9171);transform-origin:0 0;">File Size</span>
<div style="left:68px;top:524px;width:10px;height:1px;background:repeating-linear-gradient(to right,#6e6e6e 0 1px,transparent 1px 2px);"></div>
<span class="t k" style="left:79.10px;top:517.82px;font-size:12.5px;line-height:12.5px;color:#000;letter-spacing:0.500px;font-weight:bold;">MB</span>
<span class="t k" style="left:102.20px;top:519.09px;font-size:11px;line-height:11px;color:#000;letter-spacing:-0.154px;">50 - 200MB (0)</span>
<div style="left:68px;top:542px;width:10px;height:1px;background:repeating-linear-gradient(to right,#6e6e6e 0 1px,transparent 1px 2px);"></div>
<span class="t k" style="left:79.10px;top:535.82px;font-size:12.5px;line-height:12.5px;color:#000;letter-spacing:0.500px;font-weight:bold;">MB</span>
<span class="t k" style="left:102.20px;top:537.09px;font-size:11px;line-height:11px;color:#000;letter-spacing:-0.350px;">200MB - 1GB (0)</span>
<div style="left:68px;top:560px;width:10px;height:1px;background:repeating-linear-gradient(to right,#6e6e6e 0 1px,transparent 1px 2px);"></div>
<span class="t k" style="left:79.10px;top:553.82px;font-size:12.5px;line-height:12.5px;color:#000;letter-spacing:0.500px;font-weight:bold;">MB</span>
<span class="t k" style="left:102.90px;top:555.09px;font-size:11px;line-height:11px;color:#000;letter-spacing:-0.057px;">1GB+ (0)</span>
<div style="left:30px;top:578px;width:10px;height:1px;background:repeating-linear-gradient(to right,#6e6e6e 0 1px,transparent 1px 2px);"></div>
<svg width="15" height="15" viewBox="0 0 15 15" style="left:41.8px;top:570.4px">
<rect x="0.6" y="0.6" width="13.6" height="13.8" rx="1.6" fill="#1b201f" stroke="#5a5f5e" stroke-width="0.9"/>
<path d="M3.2 4 H8.4 M3.2 6.2 H7 M3.2 8.4 H10.6 M3.2 10.6 H8" stroke="#3ce0a2" stroke-width="1.2"/><path d="M9 6.2 H10.4" stroke="#2aa87a" stroke-width="1.2"/></svg>
<span class="t k" style="left:63.40px;top:573.09px;font-size:11px;line-height:11px;color:#000;letter-spacing:0.223px;">Data Artifacts</span>
<div style="left:30px;top:596px;width:10px;height:1px;background:repeating-linear-gradient(to right,#6e6e6e 0 1px,transparent 1px 2px);"></div>
<svg width="18" height="18" viewBox="0 0 18 18" style="left:41px;top:586.5px">
<circle cx="6.6" cy="6.8" r="5" fill="#d3e6f7" stroke="#404448" stroke-width="1.4"/>
<path d="M5 3.6 A3.6 3.6 0 0 1 9.4 4.6" stroke="#fff" stroke-width="1" fill="none" opacity="0.8"/>
<path d="M10.6 10.8 L15.8 16.2" stroke="#2e2e30" stroke-width="2.6" stroke-linecap="round"/></svg>
<span class="t k" style="left:65.00px;top:591.09px;font-size:11px;line-height:11px;color:#000;letter-spacing:-0.240px;">Analysis Results</span>
<div style="left:30px;top:614px;width:10px;height:1px;background:repeating-linear-gradient(to right,#6e6e6e 0 1px,transparent 1px 2px);"></div>
<svg width="17" height="16" viewBox="0 0 17 16" style="left:41px;top:606px">
<rect x="10" y="0.5" width="5.6" height="10.6" fill="#d4d8dd" stroke="#858d96" stroke-width="0.8"/><path d="M11 2.4 H14.6 M11 4.2 H14.6 M11 6 H14.6" stroke="#8a929a" stroke-width="0.7"/>
<rect x="0.6" y="1.6" width="10" height="8" fill="#e4e8ec" stroke="#6c7680" stroke-width="0.9"/><rect x="1.9" y="2.9" width="7.4" height="5.3" fill="#3d8fe6"/>
<path d="M2.6 4.4 H6.4" stroke="#9fd0ff" stroke-width="0.9"/>
<rect x="3" y="9.8" width="5.4" height="1.4" fill="#8c949c"/><rect x="1.4" y="11" width="8.8" height="0.9" fill="#70787f"/>
<circle cx="12.2" cy="9.6" r="2.3" fill="#1330d0"/><path d="M7.8 15.8 Q8.2 12 12.2 11.8 Q16.2 12 16.6 15.8 Z" fill="#1330d0"/></svg>
<span class="t k" style="left:64.40px;top:609.09px;font-size:11px;line-height:11px;color:#000;letter-spacing:-0.190px;">OS Accounts</span>
<div style="left:30px;top:632px;width:10px;height:1px;background:repeating-linear-gradient(to right,#6e6e6e 0 1px,transparent 1px 2px);"></div>
<svg width="17" height="15" viewBox="0 0 17 15" style="left:41px;top:624px">
<defs><linearGradient id="gtg" x1="0" y1="0" x2="0" y2="1"><stop offset="0" stop-color="#6f9fca"/><stop offset="1" stop-color="#46749f"/></linearGradient></defs>
<path d="M0.7 1.6 Q0.7 0.8 1.5 0.8 H5.4 L6.8 2.4 H15.2 Q16 2.4 16 3.2 V13.4 Q16 14.2 15.2 14.2 H1.5 Q0.7 14.2 0.7 13.4 Z" fill="#4f7eaa" stroke="#365f88" stroke-width="0.8"/>
<rect x="1.3" y="3.6" width="14.2" height="10.1" rx="0.6" fill="url(#gtg)"/>
<path d="M4.4 6 L8 5.4 L12.2 9.6 L9.6 12.2 L5 8.8 Z" fill="#7aa6cc" stroke="#1f3f60" stroke-width="0.9"/><circle cx="6.2" cy="7.2" r="0.8" fill="#e8f0f8" stroke="#1f3f60" stroke-width="0.5"/></svg>
<span class="t k" style="left:64.40px;top:627.09px;font-size:11px;line-height:11px;color:#000;letter-spacing:-0.033px;">Tags</span>
<div style="left:30px;top:650px;width:10px;height:1px;background:repeating-linear-gradient(to right,#6e6e6e 0 1px,transparent 1px 2px);"></div>
<svg width="13" height="17" viewBox="0 0 13 17" style="left:43px;top:641.5px">
<path d="M0.5 0.5 H8.2 L12.4 4.7 V16.2 H0.5 Z" fill="#fcfcfc" stroke="#d4d4d4" stroke-width="0.8"/><path d="M8.2 0.5 V4.7 H12.4" fill="#efefef" stroke="#d4d4d4" stroke-width="0.7"/>
<rect x="2.2" y="5.6" width="2.2" height="8.4" fill="#8cc63f"/><rect x="2.2" y="5.6" width="1" height="8.4" fill="#e8962e"/><rect x="4.8" y="8" width="2.4" height="6" fill="#e8962e"/><rect x="5.8" y="8" width="1.4" height="6" fill="#8cc63f"/><rect x="7.6" y="10" width="2.2" height="4" fill="#39a4e8"/></svg>
<span class="t k" style="left:63.40px;top:645.09px;font-size:11px;line-height:11px;color:#000;letter-spacing:0.200px;">Reports</span>
<div style="left:270px;top:107px;width:67px;height:19px;background:linear-gradient(#f3f6fe 20%,#cfdbf4);border:1px solid #7d9dc8;box-sizing:border-box;border-radius:4px 4px 0 0;border-bottom:none;border-top:3px solid #f5a428;"></div>
<div style="left:337px;top:125px;width:519px;height:1px;background:#7d9dc8;"></div>
<div style="left:270px;top:125px;width:1px;height:310px;background:#7d9dc8;"></div>
<div style="left:855px;top:125px;width:1px;height:310px;background:#7d9dc8;"></div>
<div style="left:270px;top:434px;width:586px;height:1px;background:#7d9dc8;"></div>
<span class="t k" style="left:278.50px;top:112.09px;font-size:11px;line-height:11px;color:#000;letter-spacing:-0.083px;">Listing</span>
<svg width="76" height="18" viewBox="0 0 76 18" style="left:781px;top:106px">
<defs><linearGradient id="gnb" x1="0" y1="0" x2="0" y2="1"><stop offset="0" stop-color="#ffffff"/><stop offset="1" stop-color="#ececec"/></linearGradient>
<linearGradient id="gnd" x1="0" y1="0" x2="0" y2="1"><stop offset="0" stop-color="#ffffff"/><stop offset="1" stop-color="#efe9dc"/></linearGradient></defs>
<rect x="1.5" y="1.5" width="32" height="15.4" rx="3.2" fill="url(#gnb)" stroke="#8eaad2" stroke-width="0.9"/>
<rect x="17" y="1" width="1.2" height="16.5" fill="#f8f8f8"/>
<path d="M10.8 5 L6.6 9 L10.8 13 Z M25 5 L29.2 9 L25 13 Z" fill="#8f8f8f"/>
<rect x="38.7" y="1.7" width="14.6" height="15" rx="3.4" fill="url(#gnd)" stroke="#1d4175" stroke-width="1.5"/>
<path d="M41.7 6.9 H50.3 L46 11.3 Z" fill="#151515"/>
<rect x="58.5" y="1.5" width="15.2" height="15.4" rx="3.2" fill="url(#gnb)" stroke="#8eaad2" stroke-width="0.9"/>
<rect x="62.4" y="5.6" width="7" height="6.6" fill="#fdfdfd" stroke="#858585" stroke-width="1"/><rect x="61.9" y="5.1" width="8" height="1.4" fill="#858585"/>
</svg>
<div style="left:271px;top:126px;width:584px;height:2px;background:#f4f2ea;"></div>
<span class="t k" style="left:270.00px;top:131.09px;font-size:11px;line-height:11px;color:#000;letter-spacing:-0.056px;">Plain Text</span>
<span class="t k" style="left:807.40px;top:131.09px;font-size:11px;line-height:11px;color:#000;letter-spacing:-0.211px;">1  Results</span>
<div style="left:272px;top:164px;width:581px;height:1px;background:#dcdcdc;"></div>
<div style="left:272px;top:165px;width:581px;height:1px;background:#fafafa;"></div>
<div style="left:310px;top:147px;width:59px;height:18px;background:#f0f0f0;border:1px solid #d9d9d9;box-sizing:border-box;"></div>
<div style="left:368px;top:147px;width:54px;height:18px;background:#f0f0f0;border:1px solid #d9d9d9;box-sizing:border-box;"></div>
<div style="left:272px;top:144px;width:39px;height:22px;background:#ffffff;border:1px solid #dedede;box-sizing:border-box;border-bottom:none;"></div>
<span class="t k" style="left:278.00px;top:149.09px;font-size:11px;line-height:11px;color:#000;letter-spacing:-0.250px;">Table</span>
<span class="t k" style="left:315.70px;top:150.09px;font-size:11px;line-height:11px;color:#000;transform:scaleX(0.9275);transform-origin:0 0;">Thumbnail</span>
<span class="t" style="left:372.50px;top:150.09px;font-size:11px;line-height:11px;color:#9a9a9a;letter-spacing:-0.450px;">Summary</span>
<div style="left:735px;top:170px;width:119px;height:21px;background:#e1e1e1;border:1px solid #adadad;box-sizing:border-box;"></div>
<span class="t k" style="left:748.00px;top:175.09px;font-size:11px;line-height:11px;color:#000;letter-spacing:-0.294px;">Save Table as CSV</span>
<div style="left:271px;top:195px;width:584px;height:212px;background:#ffffff;"></div>
<div style="left:361px;top:195px;width:1px;height:25px;background:#e3e3e3;"></div>
<div style="left:391px;top:195px;width:1px;height:25px;background:#e3e3e3;"></div>
<div style="left:424px;top:195px;width:1px;height:25px;background:#e3e3e3;"></div>
<div style="left:457px;top:195px;width:1px;height:25px;background:#e3e3e3;"></div>
<div style="left:601px;top:195px;width:1px;height:25px;background:#e3e3e3;"></div>
<div style="left:744px;top:195px;width:1px;height:25px;background:#e3e3e3;"></div>
<span class="t k" style="left:274.00px;top:203.09px;font-size:11px;line-height:11px;color:#000;letter-spacing:-0.333px;">Name</span>
<span class="t k" style="left:365.20px;top:203.09px;font-size:11px;line-height:11px;color:#000;">S</span>
<span class="t k" style="left:396.70px;top:203.09px;font-size:11px;line-height:11px;color:#000;">C</span>
<span class="t k" style="left:429.50px;top:203.09px;font-size:11px;line-height:11px;color:#000;">O</span>
<span class="t k" style="left:461.50px;top:203.09px;font-size:11px;line-height:11px;color:#000;letter-spacing:-0.242px;">Modified Time</span>
<span class="t k" style="left:605.80px;top:203.09px;font-size:11px;line-height:11px;color:#000;letter-spacing:-0.300px;">Change Time</span>
<span class="t k" style="left:750.60px;top:203.09px;font-size:11px;line-height:11px;color:#000;transform:scaleX(0.9258);transform-origin:0 0;">Access Time</span>
<div style="left:271px;top:220px;width:584px;height:21px;background:#0972d9;"></div>
<div style="left:361px;top:220px;width:1px;height:21px;background:#ffffff;"></div>
<div style="left:391px;top:220px;width:1px;height:21px;background:#ffffff;"></div>
<div style="left:424px;top:220px;width:1px;height:21px;background:#ffffff;"></div>
<div style="left:457px;top:220px;width:1px;height:21px;background:#ffffff;"></div>
<div style="left:601px;top:220px;width:1px;height:21px;background:#ffffff;"></div>
<div style="left:744px;top:220px;width:1px;height:21px;background:#ffffff;"></div>
<div style="left:271px;top:220px;width:90px;height:1px;background:repeating-linear-gradient(to right,#1a1208 0 1px,#ff9428 1px 2px);"></div>
<div style="left:271px;top:240px;width:90px;height:1px;background:repeating-linear-gradient(to right,#1a1208 0 1px,#ff9428 1px 2px);"></div>
<div style="left:271px;top:220px;width:1px;height:21px;background:repeating-linear-gradient(to bottom,#1a1208 0 1px,#ff9428 1px 2px);"></div>
<div style="left:360px;top:220px;width:1px;height:21px;background:repeating-linear-gradient(to bottom,#1a1208 0 1px,#ff9428 1px 2px);"></div>
<svg width="14" height="17" viewBox="0 0 14 17" style="left:282.5px;top:221.8px">
<rect x="0.6" y="0.6" width="12.6" height="15.4" fill="#f4f4f2" stroke="#b4b0a8" stroke-width="1"/>
<path d="M4 3.4 H11.4 M4 5.4 H11.4 M4 7.4 H11.4 M4 9.4 H11.4 M4 11.4 H11.4 M4 13.4 H11.4" stroke="#c9d9ee" stroke-width="1"/>
<path d="M2.2 3.4 H3.2 M2.2 5.4 H3.2 M2.2 7.4 H3.2 M2.2 9.4 H3.2 M2.2 11.4 H3.2 M2.2 13.4 H3.2" stroke="#8a8a8a" stroke-width="0.9"/></svg>
<span class="t" style="left:299.30px;top:225.09px;font-size:11px;line-height:11px;color:#fff;letter-spacing:0.288px;">Hello.txt</span>
<span class="t" style="left:426.00px;top:225.09px;font-size:11px;line-height:11px;color:#fff;">0</span>
<span class="t" style="left:459.60px;top:225.09px;font-size:11px;line-height:11px;color:#fff;letter-spacing:-0.027px;">2022-08-20 04:09:13 UTC</span>
<span class="t" style="left:603.60px;top:225.09px;font-size:11px;line-height:11px;color:#fff;letter-spacing:-0.027px;">2022-08-20 04:09:13 UTC</span>
<span class="t" style="left:747.70px;top:225.09px;font-size:11px;line-height:11px;color:#fff;letter-spacing:0.072px;">2022-08-20 04:10:25</span>
<div style="left:271px;top:407px;width:584px;height:17px;background:#f0f0f0;"></div>
<div style="left:288px;top:407px;width:171px;height:15px;background:#c1c1c1;"></div>
<svg width="7" height="8" viewBox="0 0 7 8" style="left:275.5px;top:410.5px"><path d="M5.6 0.8 L1.6 4 L5.6 7.2" stroke="#333" stroke-width="1.8" fill="none"/></svg>
<svg width="7" height="8" viewBox="0 0 7 8" style="left:843.5px;top:410.5px"><path d="M1.4 0.8 L5.4 4 L1.4 7.2" stroke="#333" stroke-width="1.8" fill="none"/></svg>
<div style="left:272px;top:443px;width:117px;height:16px;background:#f0f0f0;border:1px solid #dadada;box-sizing:border-box;"></div>
<span class="t" style="left:295.20px;top:446.09px;font-size:11px;line-height:11px;color:#9a9a9a;letter-spacing:0.215px;">Data Artifacts</span>
<div style="left:388px;top:443px;width:133px;height:16px;background:#f0f0f0;border:1px solid #dadada;box-sizing:border-box;"></div>
<span class="t" style="left:415.80px;top:446.09px;font-size:11px;line-height:11px;color:#9a9a9a;letter-spacing:-0.227px;">Analysis Results</span>
<div style="left:520px;top:443px;width:76px;height:16px;background:#f0f0f0;border:1px solid #dadada;box-sizing:border-box;"></div>
<span class="t" style="left:537.20px;top:446.09px;font-size:11px;line-height:11px;color:#9a9a9a;letter-spacing:0.383px;">Context</span>
<div style="left:595px;top:443px;width:105px;height:16px;background:#f0f0f0;border:1px solid #dadada;box-sizing:border-box;"></div>
<span class="t k" style="left:619.00px;top:446.09px;font-size:11px;line-height:11px;color:#000;letter-spacing:-0.080px;">Annotations</span>
<div style="left:699px;top:443px;width:154px;height:16px;background:#f0f0f0;border:1px solid #dadada;box-sizing:border-box;"></div>
<span class="t k" style="left:731.40px;top:446.09px;font-size:11px;line-height:11px;color:#000;letter-spacing:-0.119px;">Other Occurrences</span>
<div style="left:272px;top:458px;width:65px;height:19px;background:#f0f0f0;border:1px solid #dadada;box-sizing:border-box;"></div>
<span class="t k" style="left:294.30px;top:462.09px;font-size:11px;line-height:11px;color:#000;letter-spacing:0.600px;">Hex</span>
<div style="left:408px;top:458px;width:136px;height:19px;background:#f0f0f0;border:1px solid #dadada;box-sizing:border-box;"></div>
<span class="t" style="left:448.70px;top:462.09px;font-size:11px;line-height:11px;color:#9a9a9a;letter-spacing:-0.140px;">Application</span>
<div style="left:543px;top:458px;width:165px;height:19px;background:#f0f0f0;border:1px solid #dadada;box-sizing:border-box;"></div>
<span class="t k" style="left:592.30px;top:462.09px;font-size:11px;line-height:11px;color:#000;letter-spacing:-0.108px;">File Metadata</span>
<div style="left:707px;top:458px;width:146px;height:19px;background:#f0f0f0;border:1px solid #dadada;box-sizing:border-box;"></div>
<span class="t k" style="left:752.80px;top:462.09px;font-size:11px;line-height:11px;color:#000;letter-spacing:-0.311px;">OS Account</span>
<div style="left:336px;top:457px;width:73px;height:22px;background:#ffffff;"></div>
<span class="t k" style="left:361.00px;top:461.09px;font-size:11px;line-height:11px;color:#000;transform:scaleX(1.0900);transform-origin:0 0;">Text</span>
<div style="left:271px;top:477px;width:584px;height:1px;background:#fbfbfb;"></div>
<div style="left:271px;top:478px;width:585px;height:187px;background:#f0f0f0;border:1px solid #7b8088;box-sizing:border-box;"></div>
<div style="left:273px;top:482px;width:43px;height:19px;background:#f0f0f0;border:1px solid #d9d9d9;box-sizing:border-box;"></div>
<div style="left:394px;top:482px;width:61px;height:19px;background:#f0f0f0;border:1px solid #d9d9d9;box-sizing:border-box;"></div>
<div style="left:316px;top:480px;width:78px;height:22px;background:#ffffff;"></div>
<span class="t k" style="left:277.40px;top:486.09px;font-size:11px;line-height:11px;color:#000;letter-spacing:-0.033px;">Strings</span>
<span class="t k" style="left:321.50px;top:485.09px;font-size:11px;line-height:11px;color:#000;letter-spacing:0.382px;">Indexed Text</span>
<span class="t" style="left:397.30px;top:486.09px;font-size:11px;line-height:11px;color:#9a9a9a;letter-spacing:-0.130px;">Translation</span>
<div style="left:273px;top:501px;width:581px;height:1px;background:#e2e2e2;"></div>
<div style="left:272px;top:502px;width:583px;height:162px;border:1px solid #7b8088;box-sizing:border-box;"></div>
<span class="t k" style="left:275.60px;top:510.09px;font-size:11px;line-height:11px;color:#000;letter-spacing:-0.260px;">Page:  1  of  1  Page</span>
<div style="left:384px;top:505px;width:43px;height:20px;background:#ebebeb;border:1px solid #dcdcdc;box-sizing:border-box;border-radius:2px;"></div>
<div style="left:405px;top:506px;width:1px;height:18px;background:#dcdcdc;"></div>
<svg width="43" height="20" viewBox="0 0 43 20" style="left:384px;top:505px"><path d="M16 10 H6.5 M10.5 5.8 L6 10 L10.5 14.2 M27 10 H36.5 M32.5 5.8 L37 10 L32.5 14.2" stroke="#b9b9b9" stroke-width="2" fill="none"/></svg>
<div style="left:613px;top:505px;width:43px;height:20px;background:#ebebeb;border:1px solid #dcdcdc;box-sizing:border-box;border-radius:2px;"></div>
<div style="left:634px;top:506px;width:1px;height:18px;background:#dcdcdc;"></div>
<svg width="43" height="20" viewBox="0 0 43 20" style="left:613px;top:505px"><path d="M16 10 H6.5 M10.5 5.8 L6 10 L10.5 14.2 M27 10 H36.5 M32.5 5.8 L37 10 L32.5 14.2" stroke="#b9b9b9" stroke-width="2" fill="none"/></svg>
<div style="left:434px;top:503px;width:1px;height:25px;background:#9a9a9a;"></div>
<div style="left:435px;top:503px;width:1px;height:25px;background:#ffffff;"></div>
<div style="left:663px;top:503px;width:1px;height:25px;background:#9a9a9a;"></div>
<div style="left:664px;top:503px;width:1px;height:25px;background:#ffffff;"></div>
<div style="left:835px;top:503px;width:1px;height:25px;background:#9a9a9a;"></div>
<div style="left:836px;top:503px;width:1px;height:25px;background:#ffffff;"></div>
<span class="t k" style="left:439.70px;top:510.09px;font-size:11px;line-height:11px;color:#000;letter-spacing:-0.067px;">Matches on page:</span>
<span class="t k" style="left:533.20px;top:510.09px;font-size:11px;line-height:11px;color:#000;">-</span>
<span class="t k" style="left:544.60px;top:510.09px;font-size:11px;line-height:11px;color:#000;transform:scaleX(1.1111);transform-origin:0 0;">of</span>
<span class="t k" style="left:561.00px;top:510.09px;font-size:11px;line-height:11px;color:#000;">-</span>
<span class="t k" style="left:571.50px;top:510.09px;font-size:11px;line-height:11px;color:#000;letter-spacing:0.125px;">Match</span>
<div style="left:670px;top:505px;width:50px;height:20px;background:#f0f0f0;border:1px solid #adadad;box-sizing:border-box;"></div>
<span class="t k" style="left:686.40px;top:510.09px;font-size:11px;line-height:11px;color:#000;letter-spacing:0.300px;">100%</span>
<div style="left:721px;top:506px;width:19px;height:18px;background:#e1e1e1;border:1px solid #cfcfcf;box-sizing:border-box;"></div>
<div style="left:741px;top:506px;width:19px;height:18px;background:#e1e1e1;border:1px solid #cfcfcf;box-sizing:border-box;"></div>
<svg width="19" height="18" viewBox="0 0 19 18" style="left:721px;top:506px"><circle cx="11" cy="7.4" r="5" fill="#f4f4f4" stroke="#222" stroke-width="1.1"/><path d="M7.4 11.4 L2.6 16.4" stroke="#222" stroke-width="1.8"/><path d="M8.4 7.4 H13.6" stroke="#222" stroke-width="1.1"/></svg>
<svg width="19" height="18" viewBox="0 0 19 18" style="left:741px;top:506px"><circle cx="11" cy="7.4" r="5" fill="#f4f4f4" stroke="#222" stroke-width="1.1"/><path d="M7.4 11.4 L2.6 16.4" stroke="#222" stroke-width="1.8"/><path d="M8.4 7.4 H13.6 M11 4.8 V10" stroke="#222" stroke-width="1.1"/></svg>
<div style="left:761px;top:506px;width:68px;height:18px;background:#e1e1e1;border:1px solid #adadad;box-sizing:border-box;"></div>
<span class="t k" style="left:779.00px;top:510.09px;font-size:11px;line-height:11px;color:#000;letter-spacing:0.175px;">Reset</span>
<span class="t k" style="left:632.00px;top:535.09px;font-size:11px;line-height:11px;color:#000;letter-spacing:0.082px;">Text Source:</span>
<div style="left:699px;top:528px;width:150px;height:24px;background:#e1e1e1;border:1px solid #adadad;box-sizing:border-box;"></div>
<span class="t k" style="left:700.90px;top:535.09px;font-size:11px;line-height:11px;color:#000;letter-spacing:0.200px;">File Text</span>
<svg width="11" height="7" viewBox="0 0 11 7" style="left:833.5px;top:537.5px"><path d="M1 1 L5.5 5.5 L10 1" stroke="#333" stroke-width="1.1" fill="none"/></svg>
<div style="left:273px;top:553px;width:581px;height:110px;background:#ffffff;border:1px solid #7b8088;box-sizing:border-box;"></div>
<span class="t k" style="left:274.70px;top:564.09px;font-size:11px;line-height:11px;color:#000;">Hello, World!</span>
<span class="t k" style="left:274.70px;top:606.09px;font-size:11px;line-height:11px;color:#000;transform:scaleX(1.0954);transform-origin:0 0;">------------------------------</span>
<span class="t k" style="left:395.60px;top:606.09px;font-size:11px;line-height:11px;color:#000;letter-spacing:-0.486px;">METADATA</span>
<span class="t k" style="left:449.50px;top:606.09px;font-size:11px;line-height:11px;color:#000;transform:scaleX(1.0954);transform-origin:0 0;">------------------------------</span>
<svg width="16" height="16" viewBox="0 0 16 16" style="left:827px;top:670px">
<defs><radialGradient id="gs" cx="0.42" cy="0.3" r="0.75"><stop offset="0" stop-color="#fff0a0"/><stop offset="0.45" stop-color="#eec03a"/><stop offset="1" stop-color="#b47c12"/></radialGradient></defs>
<circle cx="7.7" cy="7.7" r="7.3" fill="url(#gs)"/>
<path d="M7.7 3 V9.6" stroke="#7a4a08" stroke-width="1.1" opacity="0.85"/><circle cx="7.7" cy="11.6" r="0.9" fill="#6b3d05"/></svg>
<span class="t k" style="left:846.00px;top:673.09px;font-size:11px;line-height:11px;color:#000;">2</span>
</body></html>
